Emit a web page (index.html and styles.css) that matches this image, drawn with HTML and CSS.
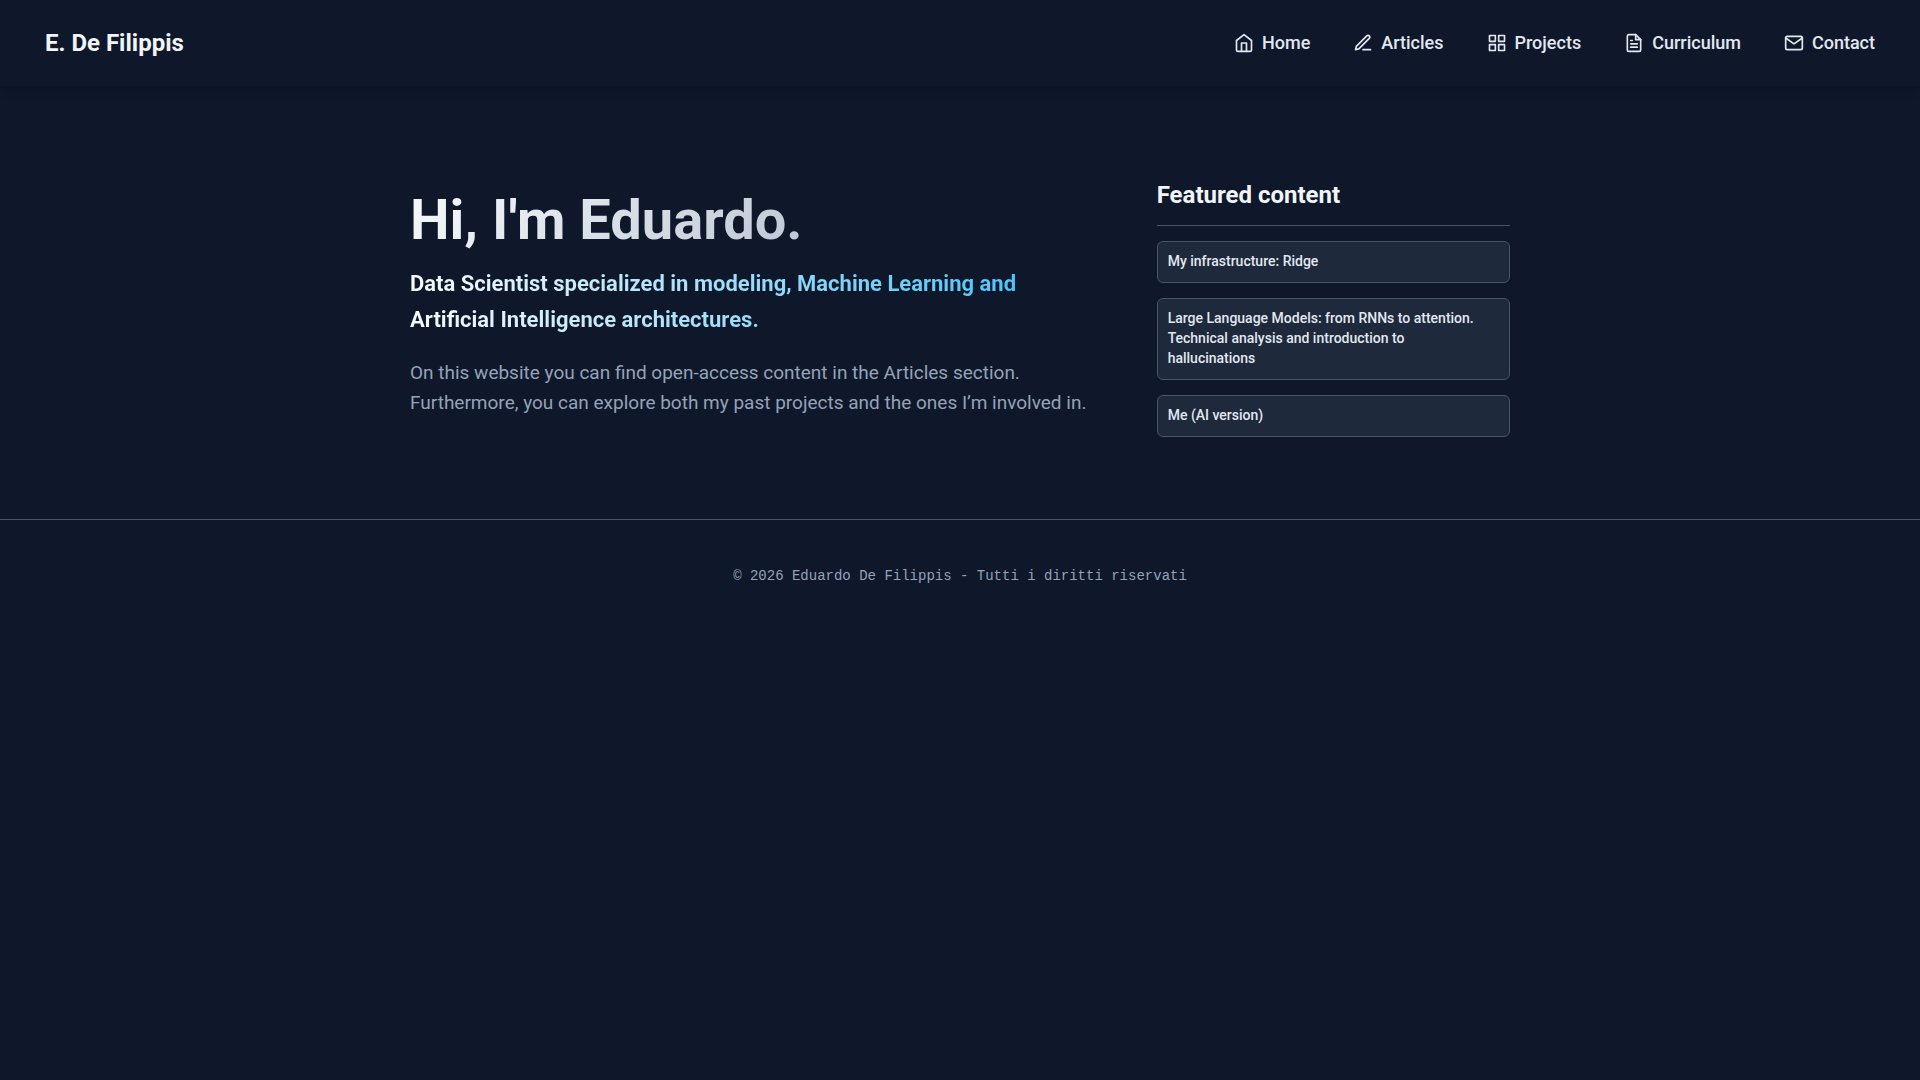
FILE: index.html
```html
<!DOCTYPE html>
<html lang="en">
<head>
<meta charset="utf-8">
<meta name="viewport" content="width=device-width, initial-scale=1">
<title>E. De Filippis</title>
<link rel="stylesheet" href="styles.css">
</head>
<body>
<header class="site-header">
  <a class="brand" href="#">E. De Filippis</a>
  <nav class="site-nav" aria-label="Main">
    <a class="nav-link" href="#"><svg class="icon" viewBox="0 0 24 24" aria-hidden="true"><path d="M3 9l9-7 9 7v11a2 2 0 0 1-2 2H5a2 2 0 0 1-2-2z"/><path d="M9 22V12h6v10"/></svg>Home</a>
    <a class="nav-link" href="#articles"><svg class="icon" viewBox="0 0 24 24" aria-hidden="true"><path d="M12 20h9"/><path d="M16.500 3.500a2.121 2.121 0 0 1 3 3L7 19l-4 1 1-4L16.500 3.500z"/></svg>Articles</a>
    <a class="nav-link" href="#projects"><svg class="icon" viewBox="0 0 24 24" aria-hidden="true"><path d="M3 3h7v7H3zM14 3h7v7h-7zM14 14h7v7h-7zM3 14h7v7H3z"/></svg>Projects</a>
    <a class="nav-link" href="#curriculum"><svg class="icon" viewBox="0 0 24 24" aria-hidden="true"><path d="M14 2H6a2 2 0 0 0-2 2v16a2 2 0 0 0 2 2h12a2 2 0 0 0 2-2V8z"/><path d="M14 2v6h6M16 13H8M16 17H8M10 9H8"/></svg>Curriculum</a>
    <a class="nav-link" href="#contact"><svg class="icon" viewBox="0 0 24 24" aria-hidden="true"><path d="M4 4h16c1.100 0 2 .9 2 2v12c0 1.100-.9 2-2 2H4c-1.100 0-2-.9-2-2V6c0-1.100.9-2 2-2z"/><path d="M22 6l-10 7L2 6"/></svg>Contact</a>
  </nav>
</header>
<main class="home">
  <section class="intro">
    <h1 class="intro-title">Hi, I'm Eduardo.</h1>
    <h2 class="intro-role">Data Scientist specialized in modeling, Machine Learning and Artificial Intelligence architectures.</h2>
    <p class="intro-text">On this website you can find open-access content in the Articles section. Furthermore, you can explore both my past projects and the ones I’m involved in.</p>
  </section>
  <aside class="featured">
    <h2 class="featured-title">Featured content</h2>
    <ul class="featured-list">
      <li><a class="card" href="#ridge">My infrastructure: Ridge</a></li>
      <li><a class="card" href="#llm">Large Language Models: from RNNs to attention. Technical analysis and introduction to hallucinations</a></li>
      <li><a class="card" href="#me">Me (AI version)</a></li>
    </ul>
  </aside>
</main>
<footer class="site-footer">© 2026 Eduardo De Filippis - Tutti i diritti riservati</footer>
</body>
</html>
```
FILE: styles.css
```css
* {
  box-sizing: border-box;
}

body {
  margin: 0;
  background: #0f172a;
  color: #f1f5f9;
  font-family: Roboto, sans-serif;
}

a {
  color: inherit;
  text-decoration: none;
}

.site-header {
  display: flex;
  align-items: center;
  justify-content: space-between;
  flex-wrap: wrap;
  gap: 16px;
  padding: 24px 45px;
  line-height: 38px;
  box-shadow: 0 4px 10px -2px rgba(0, 0, 0, 0.25);
}

.brand {
  font-size: 24px;
  font-weight: 700;
}

.site-nav {
  display: flex;
  flex-wrap: wrap;
  gap: 0 43px;
}

.nav-link {
  display: flex;
  align-items: center;
  gap: 8px;
  color: #e2e8f0;
  font-size: 18px;
  font-weight: 500;
}

.icon {
  width: 20px;
  height: 20px;
  fill: none;
  stroke: currentColor;
  stroke-width: 2;
  stroke-linecap: round;
  stroke-linejoin: round;
}

.home {
  display: grid;
  grid-template-columns: 2fr 1fr;
  align-items: center;
  gap: 40px;
  max-width: 1100px;
  margin: 0 auto;
  padding: 94px 0 82px;
}

.intro-title,
.intro-role {
  background: linear-gradient(135deg, #f8fafc, #94a3b8);
  background-clip: text;
  color: transparent;
}

.intro-title {
  margin: 0 0 12px;
  font-size: 56px;
  font-weight: 700;
  line-height: 68px;
}

.intro-role {
  max-width: 690px;
  margin: 0 0 20px;
  background-image: linear-gradient(90deg, #f8fafc, #38bdf8);
  font-size: 22px;
  font-weight: 700;
  line-height: 36px;
}

.intro-text {
  margin: 0 0 13px;
  color: #94a3b8;
  font-size: 19px;
  line-height: 30px;
}

.featured-title {
  margin: 0 0 15px;
  padding-bottom: 15px;
  border-bottom: 1px solid #475569;
  font-size: 24px;
  font-weight: 700;
  line-height: 30px;
}

.featured-list {
  display: grid;
  gap: 15px;
  margin: 0;
  padding: 0;
  list-style: none;
}

.card {
  display: block;
  padding: 9px 16px 11px 10px;
  border: 1px solid #475569;
  border-radius: 6px;
  background: #1e293b;
  color: #e2e8f0;
  font-size: 14px;
  font-weight: 500;
  line-height: 20px;
}

.site-footer {
  padding: 40px 16px;
  border-top: 1px solid #475569;
  color: #94a3b8;
  font-family: "Liberation Mono", monospace;
  font-size: 14px;
  line-height: 32px;
  text-align: center;
}
```
